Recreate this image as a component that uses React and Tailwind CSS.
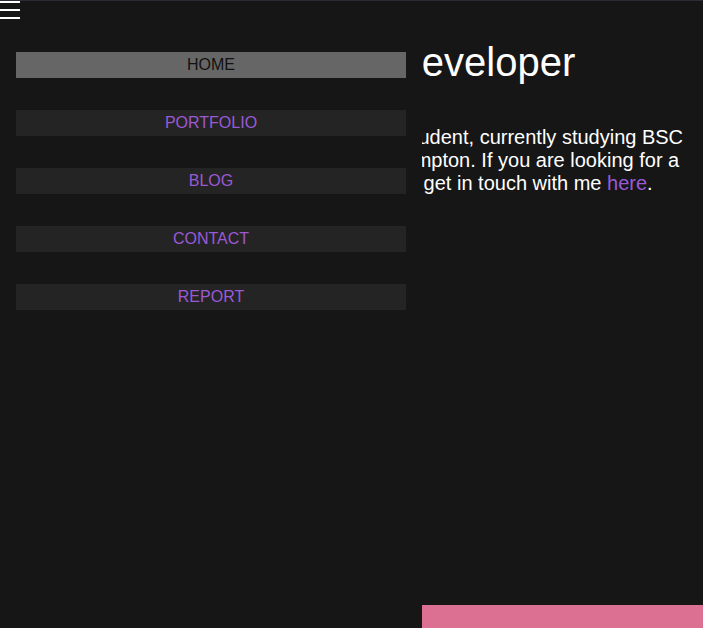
import React, { useState } from 'react';

const links = ['HOME', 'PORTFOLIO', 'BLOG', 'CONTACT', 'REPORT'];

function App() {
  const [open, setOpen] = useState(true);
  const [active] = useState('HOME');

  return (
    <div className="h-screen flex flex-col bg-[#161616] border-t border-[#2b2b3a] font-['Liberation_Sans',Arial,sans-serif] text-white overflow-hidden">
      <button
        onClick={() => setOpen(!open)}
        className="fixed top-[1px] left-0 z-20 w-5 h-[18px] flex flex-col justify-between"
        aria-label="menu"
      >
        <span className="block w-5 h-[2px] bg-white" />
        <span className="block w-5 h-[2px] bg-white" />
        <span className="block w-5 h-[2px] bg-white" />
      </button>

      <main className="flex-1 pt-[38px] px-[10px]">
        <h1 className="pl-1 text-[40px] leading-[46px]">Hello, I'm a Software Developer</h1>
        <p className="mt-[41px] text-[20px] leading-[23px]">
          I'm a web developer and Computer Science student, currently studying BSC
          <br />
          Computer Science at the University of Southampton. If you are looking for a
          <br />
          web developer, or a software engineer, please get in touch with me{' '}
          <a href="#contact" className="text-[#9b59d6]">here</a>.
        </p>
      </main>

      <footer className="h-[23px] bg-[#db7093]" />

      {open && (
        <nav className="fixed top-[1px] bottom-0 left-0 z-10 w-[422px] bg-[#161616] pt-[51px] pl-4 flex flex-col gap-8">
          {links.map((l) => (
            <a
              key={l}
              href={'#' + l.toLowerCase()}
              className={
                l === active
                  ? 'block w-[390px] h-[26px] leading-[26px] text-center text-[16px] bg-[#666666] text-[#111111]'
                  : 'block w-[390px] h-[26px] leading-[26px] text-center text-[16px] bg-[#242424] text-[#9b59d6]'
              }
            >
              {l}
            </a>
          ))}
        </nav>
      )}
    </div>
  );
}

export default App;
